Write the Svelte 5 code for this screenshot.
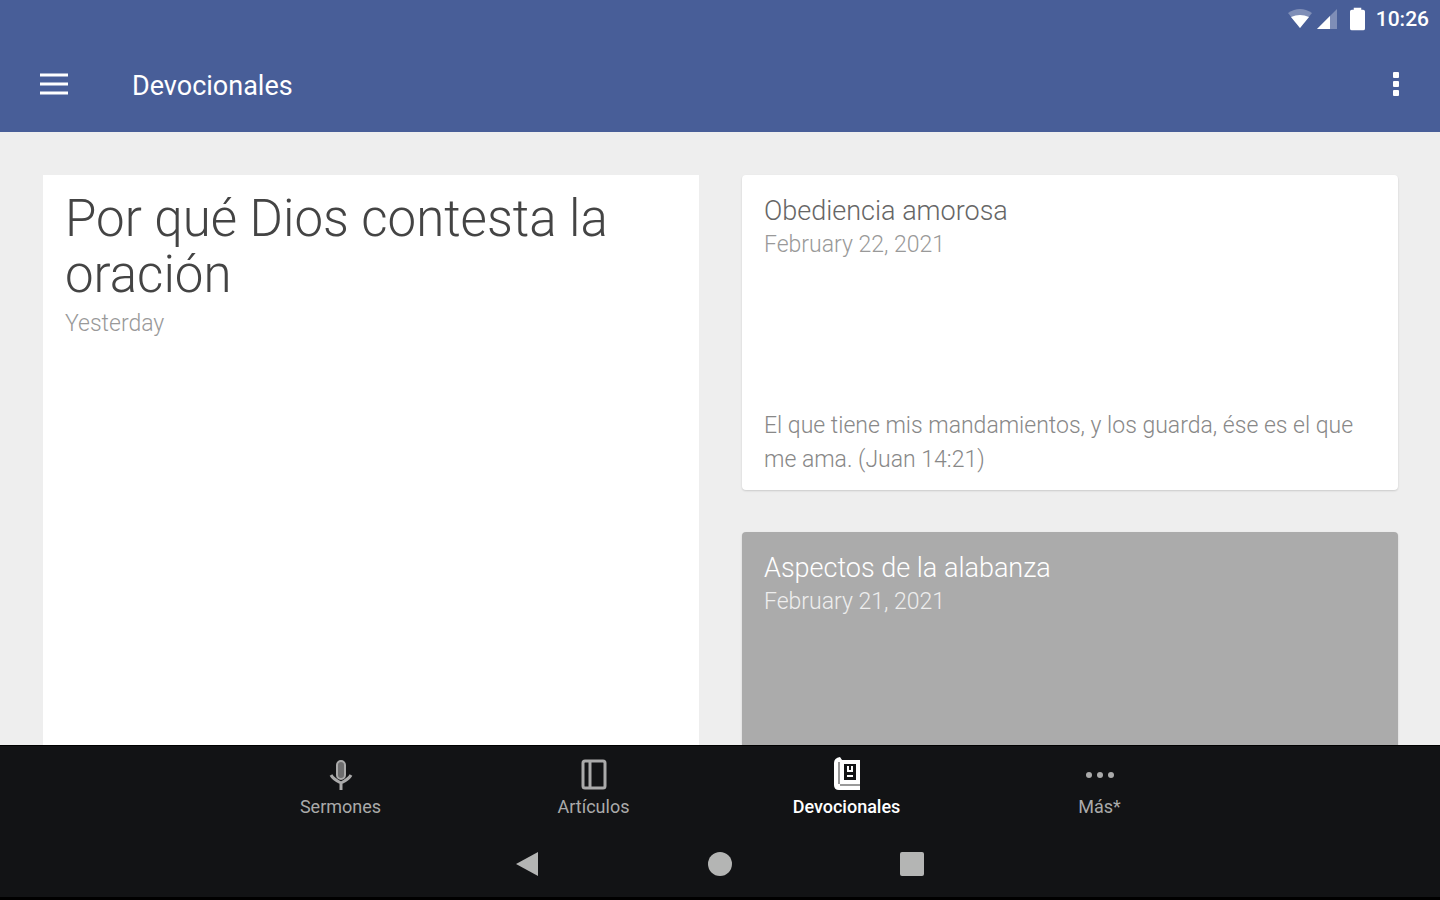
<script lang="ts">
	type Tab = { name: string; icon: string };

	// Bottom tabs
	const tabs: Tab[] = [
		{ name: 'Sermones', icon: 'mic' },
		{ name: 'Artículos', icon: 'book' },
		{ name: 'Devocionales', icon: 'devotional' },
		{ name: 'Más*', icon: 'more' }
	];

	// Cards in the right column
	const entries = [
		{
			title: 'Obediencia amorosa',
			date: 'February 22, 2021',
			verse: 'El que tiene mis mandamientos, y los guarda, ése es el que me ama. (Juan 14:21)',
			dark: false
		},
		{ title: 'Aspectos de la alabanza', date: 'February 21, 2021', verse: '', dark: true }
	];

	let current = $state('Devocionales');
</script>

<div class="screen">
	<header>
		<div class="status">
			<svg width="26" height="20" viewBox="0 0 26 20" aria-hidden="true">
				<path d="M1 4Q13-4 25 4L13 19Z" fill="#fff" opacity="0.3" />
				<path d="M4 8Q13 4 22 8L13 19Z" fill="#fff" />
			</svg>
			<svg class="signal" width="20" height="20" viewBox="0 0 20 20" aria-hidden="true">
				<path d="M0 20L20 0V20Z" fill="#fff" opacity="0.3" />
				<path d="M0 20L13 7V20Z" fill="#fff" />
			</svg>
			<svg class="battery" width="15" height="24" viewBox="0 0 16 24" aria-hidden="true">
				<path d="M4 0H12V2H14Q16 2 16 4V22Q16 24 14 24H2Q0 24 0 22V4Q0 2 2 2H4Z" fill="#fff" />
			</svg>
			<time>10:26</time>
		</div>
		<div class="toolbar">
			<button aria-label="Menu">
				<svg width="28" height="22" viewBox="0 0 28 22">
					<path d="M0 2H28M0 11H28M0 20H28" stroke="#fff" stroke-width="3" />
				</svg>
			</button>
			<h1>Devocionales</h1>
			<button aria-label="More options">
				<svg width="8" height="26" viewBox="0 0 8 26">
					<rect x="1" y="1" width="6" height="6" rx="1" fill="#fff" />
					<rect x="1" y="10" width="6" height="6" rx="1" fill="#fff" />
					<rect x="1" y="19" width="6" height="6" rx="1" fill="#fff" />
				</svg>
			</button>
		</div>
	</header>

	<main>
		<article class="card featured">
			<h2>Por qué Dios contesta la oración</h2>
			<p class="date">Yesterday</p>
		</article>
		<div class="column">
			{#each entries as entry}
				<article class="card" class:dark={entry.dark}>
					<h3>{entry.title}</h3>
					<p class="date">{entry.date}</p>
					{#if entry.verse}
						<p class="verse">{entry.verse}</p>
					{/if}
				</article>
			{/each}
		</div>
	</main>

	<nav class="tabs">
		{#each tabs as tab}
			<button class:active={current === tab.name} onclick={() => (current = tab.name)}>
				<svg width="32" height="36" viewBox="0 0 32 36" fill="none" stroke="currentColor" aria-hidden="true">
					{#if tab.icon === 'mic'}
						<rect x="12" y="5" width="8" height="18" rx="4" stroke-width="2" fill="currentColor" fill-opacity="0.6" />
						<path d="M6 19Q8 23 16 27Q24 23 26 19M16 26V34" stroke-width="3" />
					{:else if tab.icon === 'book'}
						<rect x="5" y="5" width="22" height="27" rx="2" stroke-width="3" />
						<path d="M12 5V32" stroke-width="3" />
					{:else if tab.icon === 'devotional'}
						<path
							d="M3 7Q3 2 9 1L11 4H29V34H8Q3 34 3 29Z"
							fill="currentColor"
							stroke="none"
						/>
						<path d="M8 6V28M9 29H29" stroke="#999" stroke-width="2" />
						<rect x="13" y="8" width="12" height="16" fill="#121315" stroke="none" />
						<path d="M16 10H18V14H20V10H22V16H16ZM16 19H22V21H16Z" fill="currentColor" stroke="none" />
					{:else}
						<g fill="currentColor" stroke="none">
							<circle cx="5" cy="19" r="3" />
							<circle cx="16" cy="19" r="3" />
							<circle cx="27" cy="19" r="3" />
						</g>
					{/if}
				</svg>
				<span>{tab.name}</span>
			</button>
		{/each}
	</nav>

	<footer>
		<button aria-label="Back">
			<svg width="24" height="26" viewBox="0 0 24 26"><path d="M0 13L22 1V25Z" fill="#b4b5b4" /></svg>
		</button>
		<button aria-label="Home">
			<svg width="24" height="24" viewBox="0 0 24 24"><circle cx="12" cy="12" r="12" fill="#b4b5b4" /></svg>
		</button>
		<button aria-label="Recent apps">
			<svg width="24" height="24" viewBox="0 0 24 24">
				<rect width="24" height="24" rx="2" fill="#b4b5b4" />
			</svg>
		</button>
	</footer>
</div>

<style>
	:global(body) {
		margin: 0;
	}

	.screen {
		display: flex;
		flex-direction: column;
		height: 100vh;
		overflow: hidden;
		background-color: #eee;
		font-family: Roboto, 'Liberation Sans', sans-serif;
		font-weight: 300;
	}

	h1,
	h2,
	h3,
	p {
		margin: 0;
		font-weight: inherit;
	}

	button {
		display: flex;
		align-items: center;
		justify-content: center;
		padding: 0;
		border: none;
		background: none;
		font: inherit;
		cursor: pointer;
	}

	header {
		flex: none;
		background-color: #485e98;
		color: #fff;
	}

	.status {
		display: flex;
		align-items: center;
		justify-content: flex-end;
		height: 38px;
		padding-right: 11px;
	}

	.signal {
		margin-left: 4px;
	}

	.battery {
		margin: 0 11px 0 13px;
	}

	time {
		font-size: 21px;
		font-weight: 500;
	}

	.toolbar {
		display: flex;
		align-items: center;
		height: 92px;
		padding: 0 40px 2px;
	}

	h1 {
		flex: 1;
		margin-left: 64px;
		padding-top: 4px;
		font-size: 27px;
		font-weight: 400;
		line-height: 32px;
	}

	main {
		display: grid;
		grid-template-columns: 1fr 1fr;
		gap: 43px;
		flex: 1;
		min-height: 0;
		padding: 43px 42px 0 43px;
		overflow: hidden;
	}

	.column {
		display: flex;
		flex-direction: column;
		gap: 42px;
	}

	.card {
		display: flex;
		flex-direction: column;
		flex: none;
		box-sizing: border-box;
		min-height: 315px;
		padding: 20px 22px 13px;
		border-radius: 4px;
		background-color: #fff;
		color: #666;
		box-shadow: 0 1px 2px rgba(0, 0, 0, 0.15);
	}

	.featured {
		padding-top: 16px;
		border-radius: 0;
		color: #444;
		box-shadow: none;
	}

	h2 {
		padding-bottom: 4px;
		font-size: 51px;
		line-height: 56px;
	}

	h3 {
		font-size: 27px;
		line-height: 33px;
	}

	.date {
		font-size: 23px;
		line-height: 34px;
		color: #999;
	}

	.verse {
		margin-top: auto;
		font-size: 23px;
		line-height: 34px;
		color: #888;
	}

	.dark {
		background-color: #ababab;
		color: #fff;
	}

	.dark .date {
		color: #eee;
	}

	.tabs {
		display: flex;
		justify-content: center;
		flex: none;
		height: 85px;
		border-top: 1px solid #000;
		box-sizing: border-box;
		background-color: #121315;
	}

	.tabs button {
		flex: 0 1 253px;
		flex-direction: column;
		justify-content: flex-start;
		gap: 3px;
		padding-top: 10px;
		color: #aaa;
		font-size: 18px;
		font-weight: 400;
		line-height: 24px;
	}

	.tabs .active {
		color: #fff;
		font-weight: 500;
	}

	footer {
		display: flex;
		justify-content: center;
		flex: none;
		height: 67px;
		background-color: #121315;
		border-bottom: 3px solid #000;
	}

	footer button {
		flex: 0 1 192px;
	}
</style>
